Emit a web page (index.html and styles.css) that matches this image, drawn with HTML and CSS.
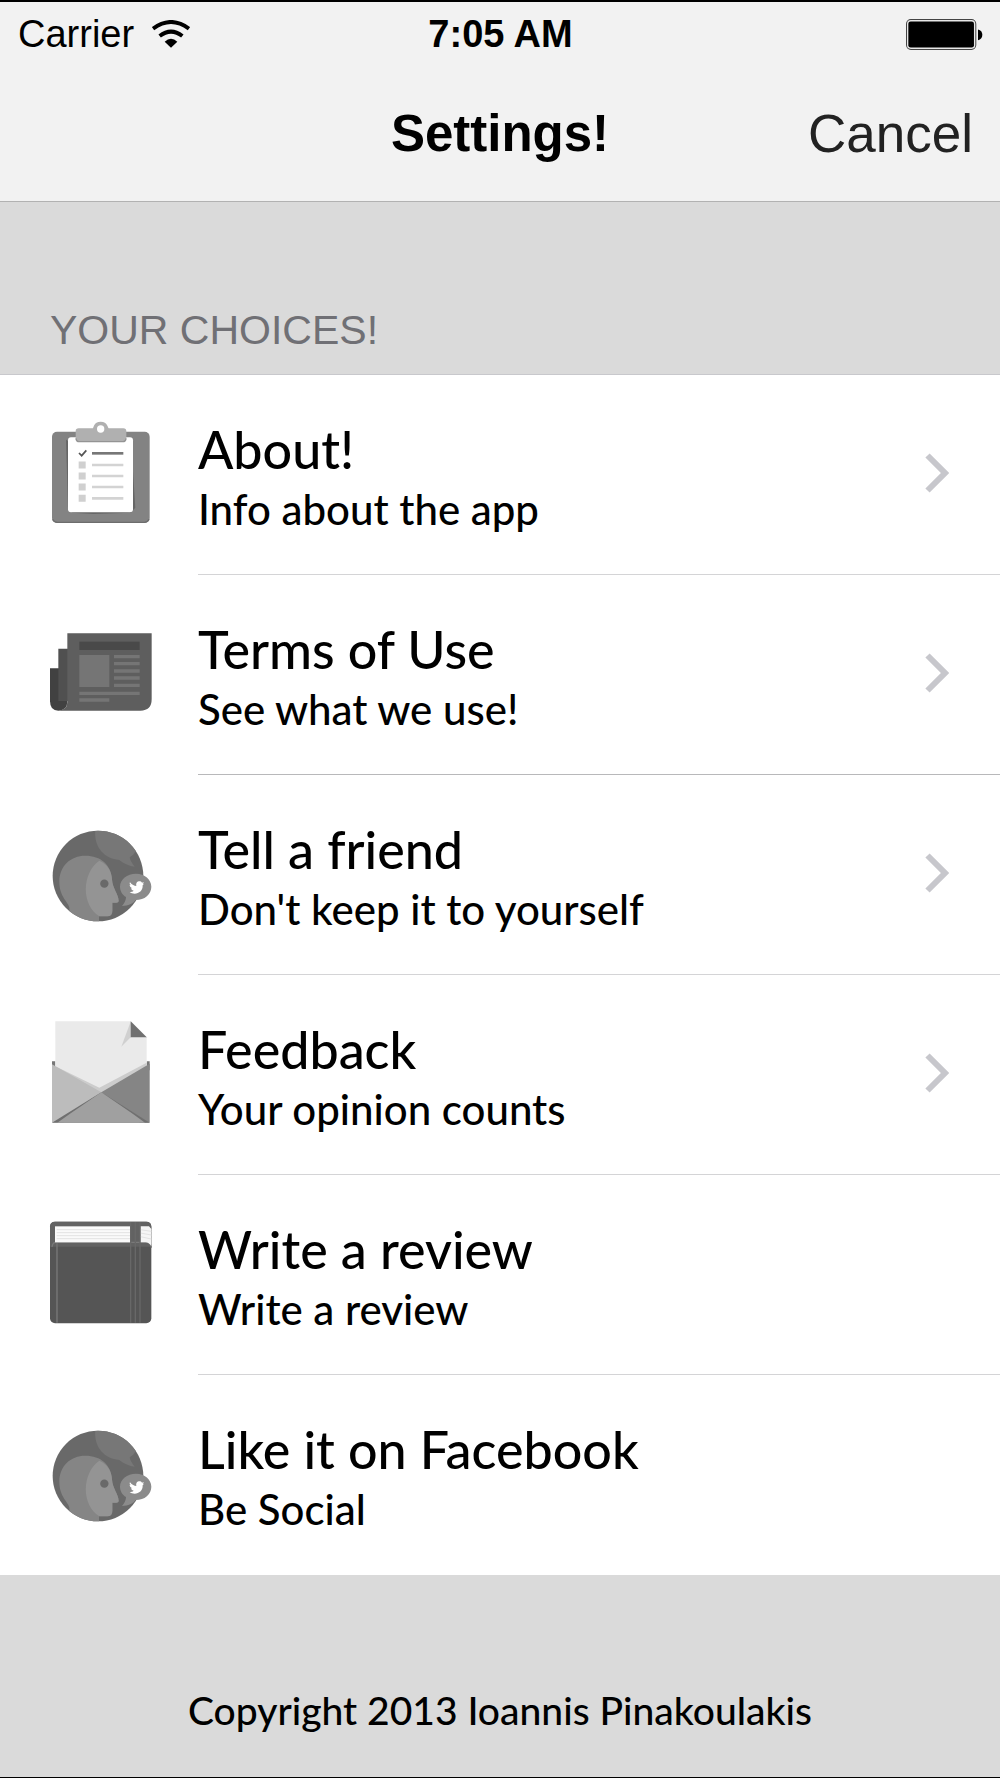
FILE: index.html
```html
<!DOCTYPE html>
<html lang="en">
<head>
<meta charset="utf-8">
<meta name="viewport" content="width=device-width, initial-scale=1">
<title>Settings!</title>
<link rel="stylesheet" href="styles.css">
</head>
<body>
<svg class="defs" width="0" height="0" aria-hidden="true">
  <symbol id="chevron" viewBox="0 0 24 44">
    <path d="M2.500 2.500 L20 20 L2.500 37.500" fill="none" stroke="#c7c7cc" stroke-width="6"/>
  </symbol>
  <symbol id="social" viewBox="57 32 324 324">
    <clipPath id="disc"><circle cx="204" cy="197" r="136"/></clipPath>
    <circle cx="204" cy="197" r="136" fill="#696969"/>
    <g clip-path="url(#disc)">
      <path d="M196 60 C191 105 218 145 268 149 C283 161 298 167 314 169 C304 157 300 148 299 141 Q310 135 318 122 L300 55Z" fill="#777"/>
      <path d="M118 340 V292 C117 277 88 260 88 214 C88 168 121 136 166 136 C212 136 244 163 246 207 C247 233 266 253 266 272 Q266 277 259 277 H247 V302 Q247 318 232 318 H207 V340Z" fill="#858585"/>
      <path d="M208 151 C232 161 245 182 246 207 C247 233 266 253 266 272 Q266 277 259 277 H247 V302 Q247 318 232 318 H208 C154 284 154 189 208 151Z" fill="#949494"/>
    </g>
    <circle cx="223" cy="220" r="12.500" fill="#696969"/>
    <path d="M318 190 C344 190 364 207 364 229 C364 252 344 269 317 269 C309 280 295 286 276 287 C284 278 288 269 288 260 C277 253 270 242 270 229 C270 207 291 190 318 190Z" fill="#8b8b8b"/>
    <path d="M300 216 C306 224 313 227 319 227 C317 217 323 213 328 213 C332 213 334 214 336 217 L342 215 L338 220 L342 220 L338 225 C339 241 327 250 314 250 C308 250 303 248 299 245 C304 245 308 244 311 241 C306 240 304 237 303 234 H307 C301 231 299 227 299 223 L303 225 C299 222 298 219 300 216Z" fill="#fff"/>
  </symbol>
</svg>
<div class="screen">
  <header class="top">
    <div class="status">
      <div class="carrier">
        <span>Carrier</span>
        <svg class="wifi" viewBox="0 0 114 84" aria-hidden="true">
          <path d="M3 26 Q57 -14 111 26" fill="none" stroke="#000" stroke-width="12"/>
          <path d="M23 48 Q57 22 91 48" fill="none" stroke="#000" stroke-width="12"/>
          <path d="M38 65 Q57 48 76 65 L57 83Z"/>
        </svg>
      </div>
      <time class="clock">7:05 AM</time>
      <svg class="battery" viewBox="0 0 230 92" aria-hidden="true">
        <rect x="1.500" y="1.500" width="207" height="89" rx="13" fill="#e8e8e8" stroke="#444" stroke-width="3"/>
        <rect x="7" y="7" width="196" height="78" rx="7"/>
        <path d="M215 31 Q228 34 228 47 Q228 60 215 63Z"/>
      </svg>
    </div>
    <div class="nav">
      <h1 class="nav-title">Settings!</h1>
      <button class="cancel" type="button">Cancel</button>
    </div>
  </header>
  <main>
    <h2 class="section">YOUR CHOICES!</h2>
    <ul class="list">
      <li><a class="row" href="#about">
        <svg class="icon" viewBox="57 62 324 324" aria-hidden="true">
          <rect x="66" y="94" width="293" height="274" rx="15" fill="#838383"/>
          <path d="M68 357 Q72 366 82 366 H343 Q353 366 357 357" fill="none" stroke="#6d6d6d" stroke-width="4"/>
          <path d="M108 118 L114 325 L126 337 L190 341 L302 337 L316 322 L309 214Z" fill="#666"/>
          <rect x="114" y="111" width="195" height="225" rx="9" fill="#fff"/>
          <path d="M137 92 Q137 84 146 84 H187 C192 84 190 64 212 64 C234 64 232 84 238 84 H280 Q289 84 289 93 V114 Q289 125 278 125 H148 Q137 125 137 114Z" fill="#b0b0b0"/>
          <path d="M138 114 Q139 124 148 124 H278 Q287 124 288 114" fill="none" stroke="#949494" stroke-width="4"/>
          <circle cx="212" cy="86" r="11" fill="#fff"/>
          <path d="M147 158 L155 166 L169 150" fill="none" stroke="#555" stroke-width="5"/>
          <path d="M186 159 H280" stroke="#777" stroke-width="8"/>
          <path d="M186 194 H280 M186 227 H280 M186 260 H280 M186 294 H280" stroke="#d3d3d3" stroke-width="8"/>
          <path d="M146 194 H167 M146 227 H167 M146 260 H167 M146 294 H167" stroke="#d0d0d0" stroke-width="21"/>
        </svg>
        <span class="body">
          <span class="text"><span class="title">About!</span><span class="sub">Info about the app</span></span>
          <svg class="chevron" aria-hidden="true"><use href="#chevron"/></svg>
        </span>
      </a></li>
      <li><a class="row" href="#terms">
        <svg class="icon" viewBox="57 32 324 324" aria-hidden="true">
          <path d="M60 174 H112 V275 Q111 301 85 301 Q60 301 60 273Z" fill="#414141"/>
          <path d="M85 115 H140 V272 H85Z" fill="#505050"/>
          <path d="M112 69 H365 V267 Q365 301 331 301 H85 Q112 299 112 275Z" fill="#5e5e5e"/>
          <rect x="148" y="94" width="181" height="25" fill="#494949"/>
          <rect x="148" y="134" width="90" height="96" fill="#757575"/>
          <path d="M252 139 H329 M252 160 H329 M252 182 H329 M252 203 H329 M252 225 H329 M148 249 H329 M148 269 H238" stroke="#757575" stroke-width="10"/>
        </svg>
        <span class="body">
          <span class="text"><span class="title">Terms of Use</span><span class="sub">See what we use!</span></span>
          <svg class="chevron" aria-hidden="true"><use href="#chevron"/></svg>
        </span>
      </a></li>
      <li><a class="row" href="#share">
        <svg class="icon" aria-hidden="true"><use href="#social"/></svg>
        <span class="body">
          <span class="text"><span class="title">Tell a friend</span><span class="sub">Don't keep it to yourself</span></span>
          <svg class="chevron" aria-hidden="true"><use href="#chevron"/></svg>
        </span>
      </a></li>
      <li><a class="row" href="#feedback">
        <svg class="icon" viewBox="57 62 324 324" aria-hidden="true">
          <path d="M66 183 H76 V210 H66Z M350 183 H359 V210 H350Z" fill="#777"/>
          <path d="M76 63 H302 L350 111 V300 H76Z" fill="#eaeaea"/>
          <path d="M302 64 V111 L274 139Z" fill="#d0d0d0"/>
          <path d="M302 63 L350 111 H302Z" fill="#707070"/>
          <path d="M76 198 L208 262 L350 187 V300 H76Z" fill="#ccc"/>
          <path d="M66 192 L214 276 L100 367 H66Z" fill="#bcbcbc"/>
          <path d="M359 190 L214 276 L330 367 H359Z" fill="#858585"/>
          <path d="M66 367 L214 276 L359 367Z" fill="#707070"/>
          <path d="M82 367 L120 340 L214 276 L308 340 L345 367Z" fill="#a0a0a0"/>
        </svg>
        <span class="body">
          <span class="text"><span class="title">Feedback</span><span class="sub">Your opinion counts</span></span>
          <svg class="chevron" aria-hidden="true"><use href="#chevron"/></svg>
        </span>
      </a></li>
      <li><a class="row" href="#review">
        <svg class="icon" viewBox="57 62 324 324" aria-hidden="true">
          <rect x="60" y="64" width="304" height="305" rx="15" fill="#555"/>
          <path d="M60 139 V79 Q60 64 75 64 H349 Q364 64 364 79 V139Z" fill="#626262"/>
          <path d="M66 140 Q68 126 77 126 H350 Q364 126 364 142" fill="none" stroke="#797979" stroke-width="4"/>
          <rect x="75" y="78" width="226" height="48" fill="#fafafa"/>
          <path d="M331 78 H357 L364 86 V138 Q357 126 346 126 H331Z" fill="#f5f5f5"/>
          <path d="M80 88 H300 M80 97 H300 M80 106 H300 M80 115 H300 M331 88 L364 93 M331 98 L364 104 M331 109 L364 116" stroke="#e2e2e2" stroke-width="3"/>
          <path d="M81 129 V367" stroke="#727272" stroke-width="5"/>
          <path d="M302 65 V367 M316 65 V367 M330 65 V367" stroke="#686868" stroke-width="4"/>
        </svg>
        <span class="body">
          <span class="text"><span class="title">Write a review</span><span class="sub">Write a review</span></span>
        </span>
      </a></li>
      <li><a class="row" href="#facebook">
        <svg class="icon" aria-hidden="true"><use href="#social"/></svg>
        <span class="body">
          <span class="text"><span class="title">Like it on Facebook</span><span class="sub">Be Social</span></span>
        </span>
      </a></li>
    </ul>
  </main>
  <footer class="footer">Copyright 2013 Ioannis Pinakoulakis</footer>
</div>
</body>
</html>
```
FILE: styles.css
```css
* { box-sizing: border-box; }
body { margin: 0; background: #dadada; color: #000; font-family: "Liberation Sans", Arial, sans-serif; }
.defs { display: block; }
.screen { min-height: 100vh; display: flex; flex-direction: column; border-top: 2px solid #000; border-bottom: 2px solid #000; }

.top { background: #f2f2f2; border-bottom: 1px solid #b2b2b2; }
.status { display: grid; grid-template-columns: 1fr auto 1fr; align-items: center; height: 64px; padding: 0 17px 0 18px; font-size: 38px; }
.carrier { display: flex; align-items: center; gap: 18px; }
.wifi { width: 38px; height: 28px; }
.clock { font-weight: 700; }
.battery { justify-self: end; width: 77px; height: 31px; }
.nav { display: grid; grid-template-columns: 1fr auto 1fr; align-items: center; height: 135px; padding: 0 27px; }
.nav-title { grid-column: 2; margin: 0; font-size: 51px; font-weight: 700; }
.cancel { justify-self: end; padding: 0; border: 0; background: none; color: #222; font: 400 53px "Liberation Sans", Arial, sans-serif; }

.section { margin: 0; padding: 102px 50px 18px; font-size: 41px; font-weight: 400; line-height: 52px; color: #707075; border-bottom: 1px solid #c8c8cc; }
.list { margin: 0; padding: 0; list-style: none; background: #fff; }
.row { display: flex; align-items: center; height: 200px; padding-left: 49px; color: inherit; text-decoration: none; font-family: Lato, sans-serif; font-weight: 500; }
.icon { width: 108px; height: 108px; flex: none; }
.body { flex: 1; display: flex; align-items: center; justify-content: space-between; height: 100%; margin-left: 41px; padding-right: 51px; border-bottom: 1px solid #d4d4d6; }
li:nth-child(2) .body { border-color: #b8b8ba; }
li:last-child .body { border-color: transparent; }
.text { display: flex; flex-direction: column; padding-top: 8px; }
.title { font-size: 52px; line-height: 60px; }
.sub { font-size: 42px; line-height: 60px; }
.chevron { width: 24px; height: 44px; flex: none; }
.footer { padding: 108px 20px 40px; text-align: center; font: 500 39px/54px Lato, sans-serif; }
```
